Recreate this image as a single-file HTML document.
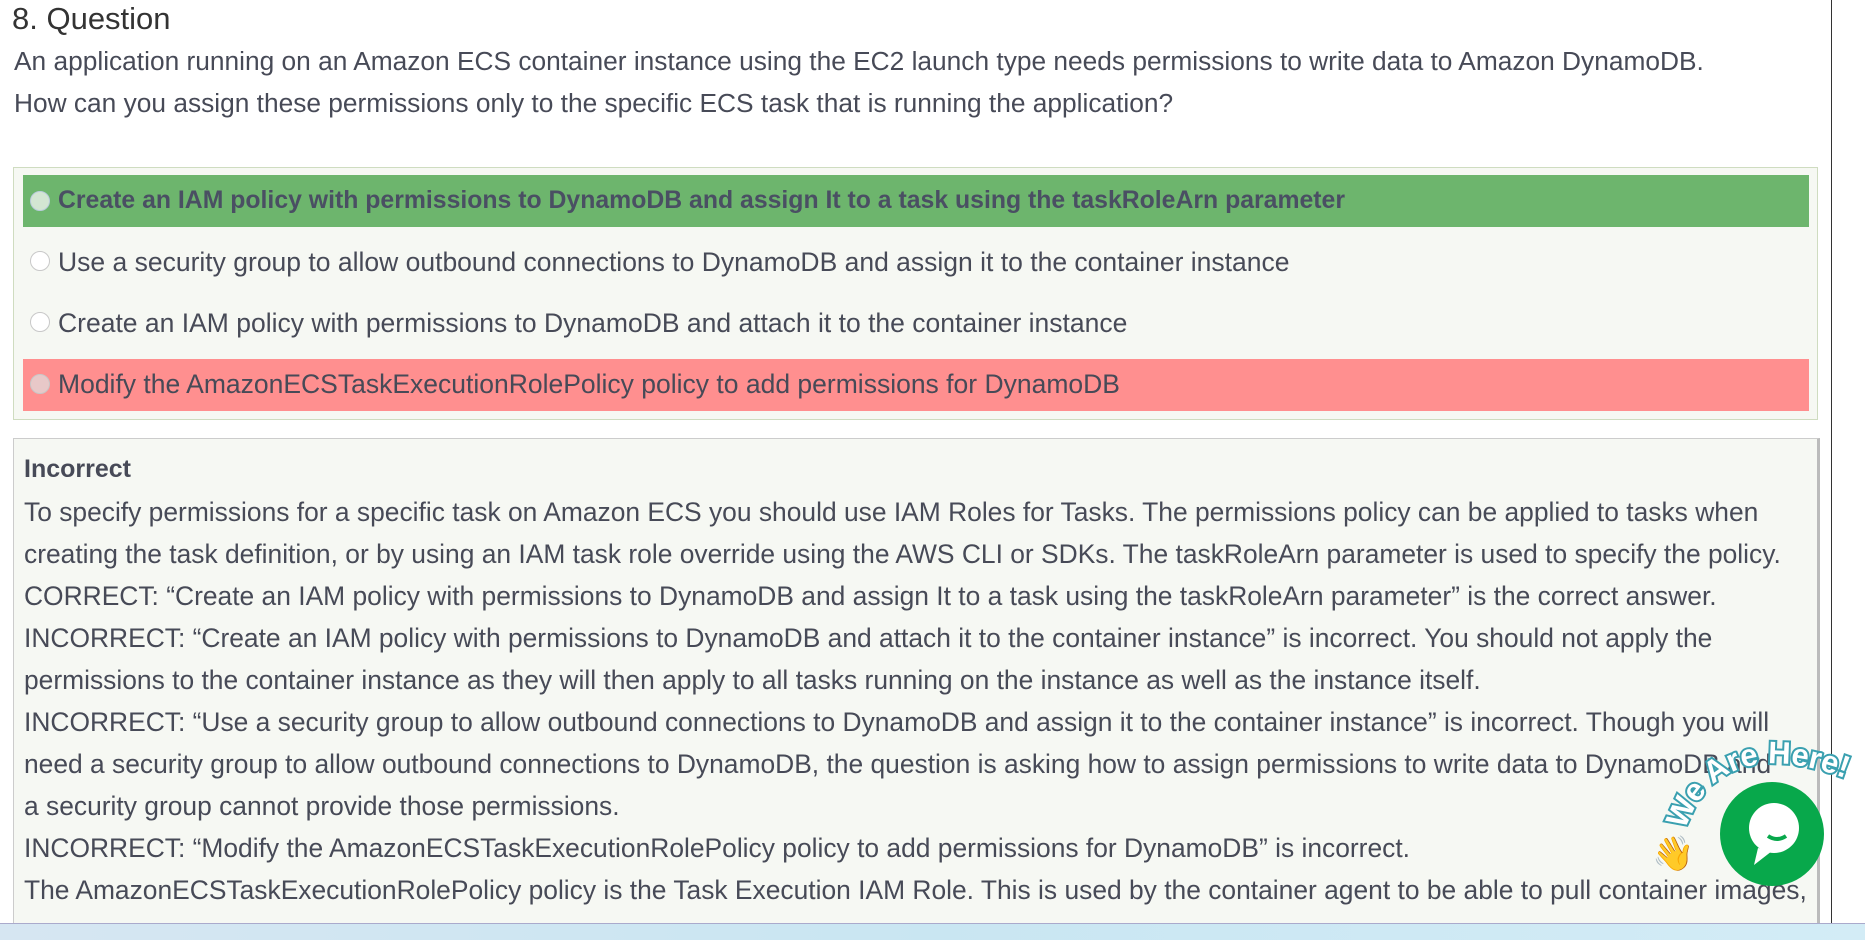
<!DOCTYPE html>
<html><head><meta charset="utf-8"><style>
html,body{margin:0;padding:0;width:1865px;height:940px;overflow:hidden;background:#fff;font-family:"Liberation Sans",sans-serif;color:#474a57;position:relative}
.a{position:absolute;white-space:nowrap}
h1{position:absolute;left:12px;top:1px;margin:0;font-weight:normal;font-size:31px;color:#333}
.q{font-size:26.3px;left:14px}
.box{position:absolute;left:13px;top:167px;width:1803px;height:251px;border:1px solid #cfdcc0;background:#f6f8f3}
.bar{position:absolute;left:23px;width:1786px;height:52px}
.opt{font-size:26.5px;left:58px}
.rad{position:absolute;left:30px;width:20px;height:20px;border-radius:50%;border:1px solid #c8c8c8;background:#fff;box-sizing:border-box}
.exp{position:absolute;left:13px;top:438px;width:1803px;height:490px;border:1px solid #ccc;border-right:3px solid #bbb;background:#f6f8f3}
.l{font-size:26.4px;left:24px}
.tb{position:absolute;left:0;top:923px;width:1865px;height:17px;background:linear-gradient(90deg,#d6e6f2,#c9e6f2,#d3ecf6);border-top:1px solid #aac}
</style></head><body>
<h1>8. Question</h1>
<div class="a q" style="top:46px">An application running on an Amazon ECS container instance using the EC2 launch type needs permissions to write data to Amazon DynamoDB.</div>
<div class="a q" style="top:88px">How can you assign these permissions only to the specific ECS task that is running the application?</div>
<div class="box"></div>
<div class="bar" style="top:175px;background:#6db56d"></div>
<div class="bar" style="top:359px;background:#ff8f8f"></div>
<div class="rad" style="top:191px;background:#d3e6d3;border-color:#bcd"></div>
<div class="rad" style="top:251px"></div>
<div class="rad" style="top:312px"></div>
<div class="rad" style="top:374px;background:#e8c8c8"></div>
<div class="a opt" style="top:187px;font-weight:bold;font-size:24.8px;color:#4a4f63">Create an IAM policy with permissions to DynamoDB and assign It to a task using the taskRoleArn parameter</div>
<div class="a opt" style="top:247px">Use a security group to allow outbound connections to DynamoDB and assign it to the container instance</div>
<div class="a opt" style="top:308px">Create an IAM policy with permissions to DynamoDB and attach it to the container instance</div>
<div class="a opt" style="top:369px">Modify the AmazonECSTaskExecutionRolePolicy policy to add permissions for DynamoDB</div>
<div class="exp"></div>
<div class="a l" style="top:455px;font-weight:bold;font-size:25px">Incorrect</div>
<div class="a l" style="top:497px">To specify permissions for a specific task on Amazon ECS you should use IAM Roles for Tasks. The permissions policy can be applied to tasks when</div>
<div class="a l" style="top:539px">creating the task definition, or by using an IAM task role override using the AWS CLI or SDKs. The taskRoleArn parameter is used to specify the policy.</div>
<div class="a l" style="top:581px">CORRECT: “Create an IAM policy with permissions to DynamoDB and assign It to a task using the taskRoleArn parameter” is the correct answer.</div>
<div class="a l" style="top:623px">INCORRECT: “Create an IAM policy with permissions to DynamoDB and attach it to the container instance” is incorrect. You should not apply the</div>
<div class="a l" style="top:665px">permissions to the container instance as they will then apply to all tasks running on the instance as well as the instance itself.</div>
<div class="a l" style="top:707px">INCORRECT: “Use a security group to allow outbound connections to DynamoDB and assign it to the container instance” is incorrect. Though you will</div>
<div class="a l" style="top:749px">need a security group to allow outbound connections to DynamoDB, the question is asking how to assign permissions to write data to DynamoDB and</div>
<div class="a l" style="top:791px">a security group cannot provide those permissions.</div>
<div class="a l" style="top:833px">INCORRECT: “Modify the AmazonECSTaskExecutionRolePolicy policy to add permissions for DynamoDB” is incorrect.</div>
<div class="a l" style="top:875px">The AmazonECSTaskExecutionRolePolicy policy is the Task Execution IAM Role. This is used by the container agent to be able to pull container images,</div>
<div style="position:absolute;left:1831px;top:0;width:1px;height:923px;background:#333"></div>
<svg style="position:absolute;left:1640px;top:720px" width="225" height="200" viewBox="0 0 225 200">
<defs><path id="arc" d="M45,110 Q80,10 210,60"/></defs>
<text font-family="Liberation Sans,sans-serif" font-weight="bold" font-size="31" fill="#fff" stroke="#3aa0b0" stroke-width="4" paint-order="stroke"><textPath href="#arc">We Are Here!</textPath></text>
<circle cx="132" cy="114" r="52" fill="#08a84b"/>
<circle cx="134" cy="108" r="25" fill="#fff"/>
<path d="M118,128 L114,145 L132,131 Z" fill="#fff"/>
<path d="M128,116 Q137,122 146,116" stroke="#08a84b" stroke-width="4" fill="none"/>
<text x="12" y="145" font-size="34">👋</text>
</svg>
<div class="tb"></div>
</body></html>
